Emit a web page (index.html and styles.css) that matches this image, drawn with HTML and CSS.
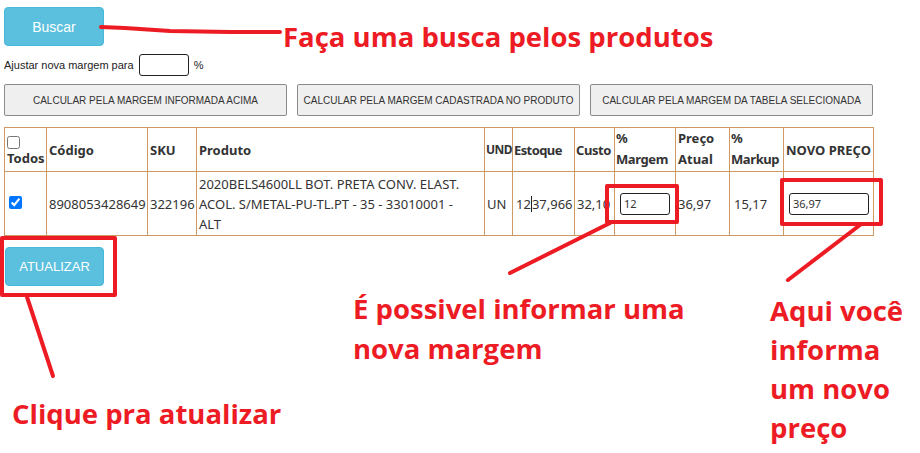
FILE: index.html
```html
<!DOCTYPE html>
<html lang="pt-BR">
<head>
<meta charset="utf-8">
<title>Ajuste de preços</title>
<link rel="stylesheet" href="styles.css">
</head>
<body>
<div class="page">
  <button class="btn-info btn-buscar">Buscar</button>

  <div class="ajuste">
    <span>Ajustar nova margem para</span>
    <input class="pct-input" type="text">
    <span>%</span>
  </div>

  <div class="calc-row">
    <button class="btn-calc">CALCULAR PELA MARGEM INFORMADA ACIMA</button>
    <button class="btn-calc">CALCULAR PELA MARGEM CADASTRADA NO PRODUTO</button>
    <button class="btn-calc">CALCULAR PELA MARGEM DA TABELA SELECIONADA</button>
  </div>

  <table class="grid">
    <colgroup>
      <col class="c1"><col class="c2"><col class="c3"><col class="c4"><col class="c5"><col class="c6">
      <col class="c7"><col class="c8"><col class="c9"><col class="c10"><col class="c11">
    </colgroup>
    <thead>
      <tr>
        <th class="th-todos"><input type="checkbox" class="chk"><br>Todos</th>
        <th>Código</th>
        <th>SKU</th>
        <th>Produto</th>
        <th class="tight und">UND</th>
        <th class="tight">Estoque</th>
        <th class="narrow">Custo</th>
        <th class="top narrow">%<br>Margem</th>
        <th class="top">Preço<br>Atual</th>
        <th class="top narrow">%<br>Markup</th>
        <th>NOVO PREÇO</th>
      </tr>
    </thead>
    <tbody>
      <tr>
        <td class="td-chk"><input type="checkbox" class="chk" checked></td>
        <td>8908053428649</td>
        <td>322196</td>
        <td class="produto">2020BELS4600LL BOT. PRETA CONV. ELAST. ACOL. S/METAL-PU-TL.PT - 35 - 33010001 - ALT</td>
        <td>UN</td>
        <td class="est">12<span class="caret"></span>37,966</td>
        <td>32,10</td>
        <td><input class="cell-input in-margem" type="text" value="12"></td>
        <td>36,97</td>
        <td class="pad">15,17</td>
        <td><input class="cell-input in-preco" type="text" value="36,97"></td>
      </tr>
    </tbody>
  </table>

  <button class="btn-info btn-atualizar">ATUALIZAR</button>
</div>

<svg class="marks" width="920" height="453" viewBox="0 0 920 453" aria-hidden="true">
  <g fill="none" stroke="#ed1c24" stroke-linecap="round" stroke-linejoin="round">
    <polyline points="101,27 125,28 170,31 230,32 280,32" stroke-width="4"/>
    <rect x="607" y="186" width="70" height="36" stroke-width="4"/>
    <rect x="782" y="180" width="99" height="44" stroke-width="4"/>
    <rect x="2" y="238" width="113" height="57" stroke-width="4"/>
    <line x1="610" y1="223" x2="510" y2="273" stroke-width="4"/>
    <line x1="860" y1="225" x2="788" y2="280" stroke-width="4"/>
    <line x1="27" y1="297" x2="53" y2="376" stroke-width="4"/>
  </g>
</svg>

<div class="note note-busca">Faça uma busca pelos produtos</div>
<div class="note note-margem">É possivel informar uma<br>nova margem</div>
<div class="note note-preco">Aqui você<br>informa<br>um novo<br>preço</div>
<div class="note note-atualizar">Clique pra atualizar</div>
</body>
</html>
```

FILE: styles.css
```css
html, body {
  margin: 0;
  padding: 0;
  background: #fff;
}

body {
  width: 920px;
  height: 453px;
  overflow: hidden;
  position: relative;
  font-family: "Liberation Sans", Arial, sans-serif;
  color: #333;
}

.page {
  padding: 7px 0 0 4px;
  display: flex;
  flex-direction: column;
  align-items: flex-start;
}

.btn-info {
  background: #5bc0de;
  color: #fff;
  border: 1px solid #46b8da;
  border-radius: 4px;
  font-family: "Liberation Sans", Arial, sans-serif;
  cursor: pointer;
}

.btn-buscar {
  width: 100px;
  height: 39px;
  font-size: 14px;
}

.ajuste {
  margin-top: 8px;
  display: flex;
  align-items: center;
  font-size: 11px;
  color: #222;
}

.pct-input {
  width: 50px;
  height: 22px;
  box-sizing: border-box;
  margin: 0 5px 0 5px;
  border: 1px solid #222;
  border-radius: 3px;
  padding: 0 3px;
}

.calc-row {
  margin-top: 8px;
  display: flex;
  gap: 10px;
}

.btn-calc {
  width: 283px;
  height: 32px;
  background: #efefef;
  border: 1px solid #8a8a8a;
  border-radius: 2px;
  font-family: "Liberation Sans", Arial, sans-serif;
  font-size: 10px;
  color: #333;
  padding: 0;
}

.grid {
  margin-top: 11px;
  border-collapse: collapse;
  table-layout: fixed;
  width: 869px;
  font-family: "Noto Sans", sans-serif;
  font-size: 13px;
  color: #333;
}

.c1 { width: 42px; }
.c2 { width: 101px; }
.c3 { width: 49px; }
.c4 { width: 288px; }
.c5 { width: 28px; }
.c6 { width: 62px; }
.c7 { width: 40px; }
.c8 { width: 61px; }
.c9 { width: 54px; }
.c10 { width: 54px; }
.c11 { width: 90px; }

.grid th,
.grid td {
  border: 1px solid #cf9a62;
  padding: 1px 2px;
  line-height: 20px;
  text-align: left;
  vertical-align: middle;
  white-space: nowrap;
}

.grid th {
  font-weight: 700;
  height: 39px;
  overflow: visible;
}

.grid td {
  overflow: hidden;
}

.grid th.tight {
  padding: 1px 0 1px 1px;
  letter-spacing: -0.6px;
}

.grid th.und {
  font-size: 12px;
  letter-spacing: -0.5px;
}

.grid th.narrow {
  padding-left: 1px;
  padding-right: 0;
  letter-spacing: -0.4px;
}

.grid th.top {
  vertical-align: top;
  line-height: 21px;
  padding-top: 0;
}

.grid td {
  height: 61px;
  padding: 1px 2px;
}

.grid td.produto {
  white-space: normal;
  padding-right: 10px;
}

.th-todos {
  line-height: 14px !important;
  padding-top: 2px !important;
}

.chk {
  width: 13px;
  height: 13px;
  margin: 0;
  accent-color: #0075ff;
}

.td-chk {
  padding-left: 4px !important;
}

.est {
  padding-left: 3px !important;
}

.caret {
  display: inline-block;
  width: 1px;
  height: 16px;
  background: #222;
  vertical-align: -3px;
}

.pad {
  padding-left: 4px !important;
}

.cell-input {
  box-sizing: border-box;
  height: 22px;
  border: 1px solid #222;
  border-radius: 3px;
  font-family: "Noto Sans", sans-serif;
  font-size: 11px;
  color: #333;
  padding: 0 3px;
  display: block;
}

.in-margem {
  width: 50px;
  margin-left: 3px;
}

.in-preco {
  width: 80px;
  margin-left: 3px;
}

.btn-atualizar {
  margin-top: 11px;
  margin-left: 1px;
  width: 99px;
  height: 39px;
  font-size: 13px;
}

.marks {
  position: absolute;
  left: 0;
  top: 0;
  pointer-events: none;
}

.note {
  position: absolute;
  color: #ed1c24;
  font-family: "Open Sans", "Noto Sans", sans-serif;
  font-weight: 700;
  font-size: 27.5px;
  white-space: nowrap;
}

.note-busca {
  left: 283px;
  top: 17px;
  line-height: 40px;
}

.note-margem {
  left: 353px;
  top: 289px;
  line-height: 40px;
}

.note-preco {
  left: 770px;
  top: 291px;
  line-height: 39px;
}

.note-atualizar {
  left: 12px;
  top: 394px;
  line-height: 40px;
}
```
